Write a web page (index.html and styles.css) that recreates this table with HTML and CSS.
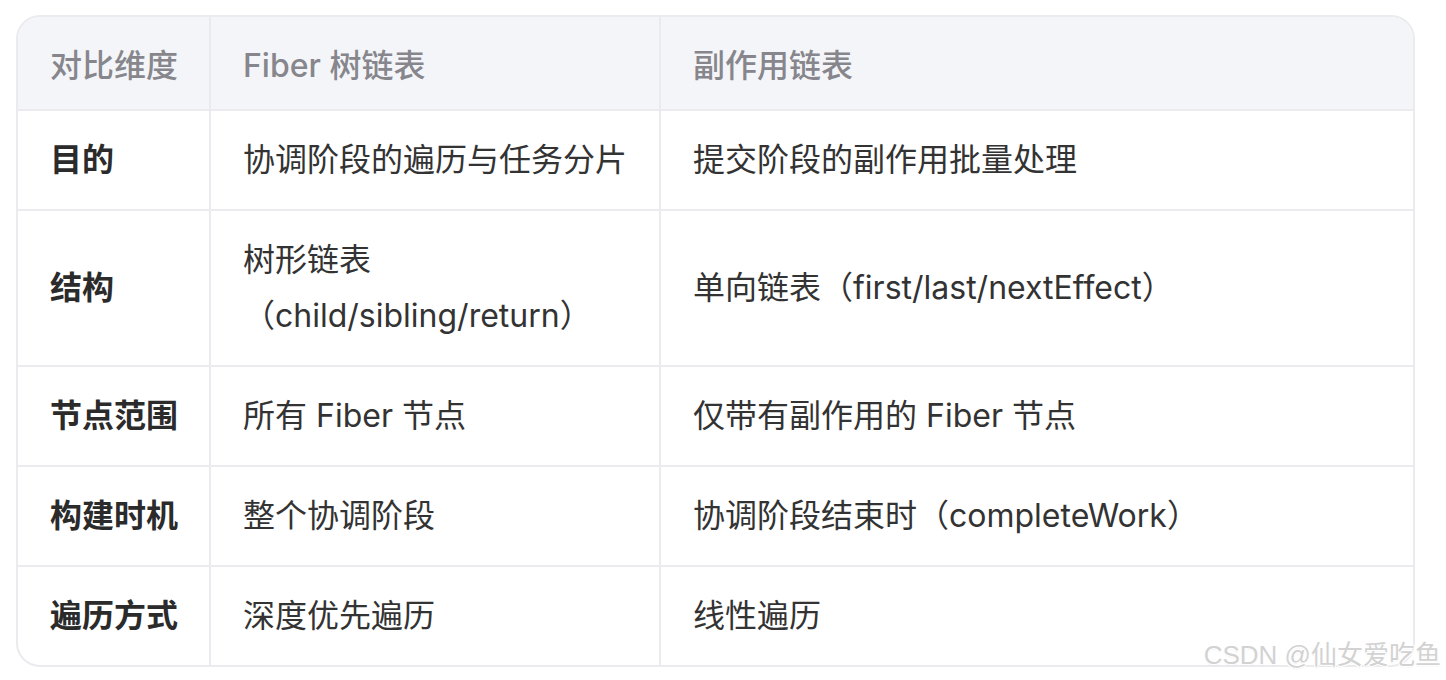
FILE: index.html
```html
<!DOCTYPE html>
<html lang="zh-CN">
<head>
<meta charset="utf-8">
<title>Fiber 树链表 vs 副作用链表</title>
<link rel="stylesheet" href="styles.css">
</head>
<body>
<div class="page">
  <div class="table-wrap">
    <table class="cmp">
      <colgroup>
        <col class="c1"><col class="c2"><col class="c3">
      </colgroup>
      <thead>
        <tr><th class="first">对比维度</th><th>Fiber 树链表</th><th>副作用链表</th></tr>
      </thead>
      <tbody>
        <tr><td class="key">目的</td><td>协调阶段的遍历与任务分片</td><td>提交阶段的副作用批量处理</td></tr>
        <tr><td class="key">结构</td><td>树形链表（child/sibling/return）</td><td>单向链表（first/last/nextEffect）</td></tr>
        <tr><td class="key">节点范围</td><td>所有 Fiber 节点</td><td>仅带有副作用的 Fiber 节点</td></tr>
        <tr><td class="key">构建时机</td><td>整个协调阶段</td><td>协调阶段结束时（completeWork）</td></tr>
        <tr><td class="key">遍历方式</td><td>深度优先遍历</td><td>线性遍历</td></tr>
      </tbody>
    </table>
  </div>
  <div class="watermark">CSDN @仙女爱吃鱼</div>
</div>
</body>
</html>
```
FILE: styles.css
```css
html, body {
  margin: 0;
  padding: 0;
  background: #ffffff;
}
body {
  font-family: Inter, "Noto Sans CJK SC", sans-serif;
  color: #333333;
}
.page {
  position: relative;
  width: 1446px;
  height: 680px;
  padding: 15px 0 0 16px;
  box-sizing: border-box;
}
.table-wrap {
  width: 1399px;
  border: 2px solid #ebebef;
  border-radius: 24px;
  overflow: hidden;
  box-sizing: border-box;
}
.cmp {
  width: 100%;
  border-collapse: collapse;
  table-layout: fixed;
  font-size: 32px;
  line-height: 56px;
}
.c1 { width: 192px; }
.c2 { width: 450px; }
.c3 { width: auto; }
.cmp th, .cmp td {
  text-align: left;
  vertical-align: middle;
  border-right: 2px solid #ebebef;
  border-bottom: 2px solid #ebebef;
  padding: 21px 32px;
}
.cmp th:last-child, .cmp td:last-child { border-right: none; }
.cmp tbody tr:last-child td { border-bottom: none; }
.cmp th {
  background: #f4f5f8;
  color: #86868c;
  font-weight: 500;
  padding: 21px 32px 15px;
}
.cmp th.first, .cmp td.key { white-space: nowrap; }
.cmp td { color: #333333; font-weight: 400; }
.cmp td.key { font-weight: 700; color: #2b2b2b; }
.watermark {
  position: absolute;
  right: 5px;
  top: 637px;
  font-family: "Liberation Sans", "Noto Sans CJK SC", sans-serif;
  font-size: 26px;
  line-height: 36px;
  color: #d2d2d2;
  text-shadow: 1px 1px 0 #ffffff, -1px -1px 0 #ffffff, 1px -1px 0 #ffffff, -1px 1px 0 #ffffff, 0 1px 1px #bdbdbd;
  white-space: nowrap;
}
```
